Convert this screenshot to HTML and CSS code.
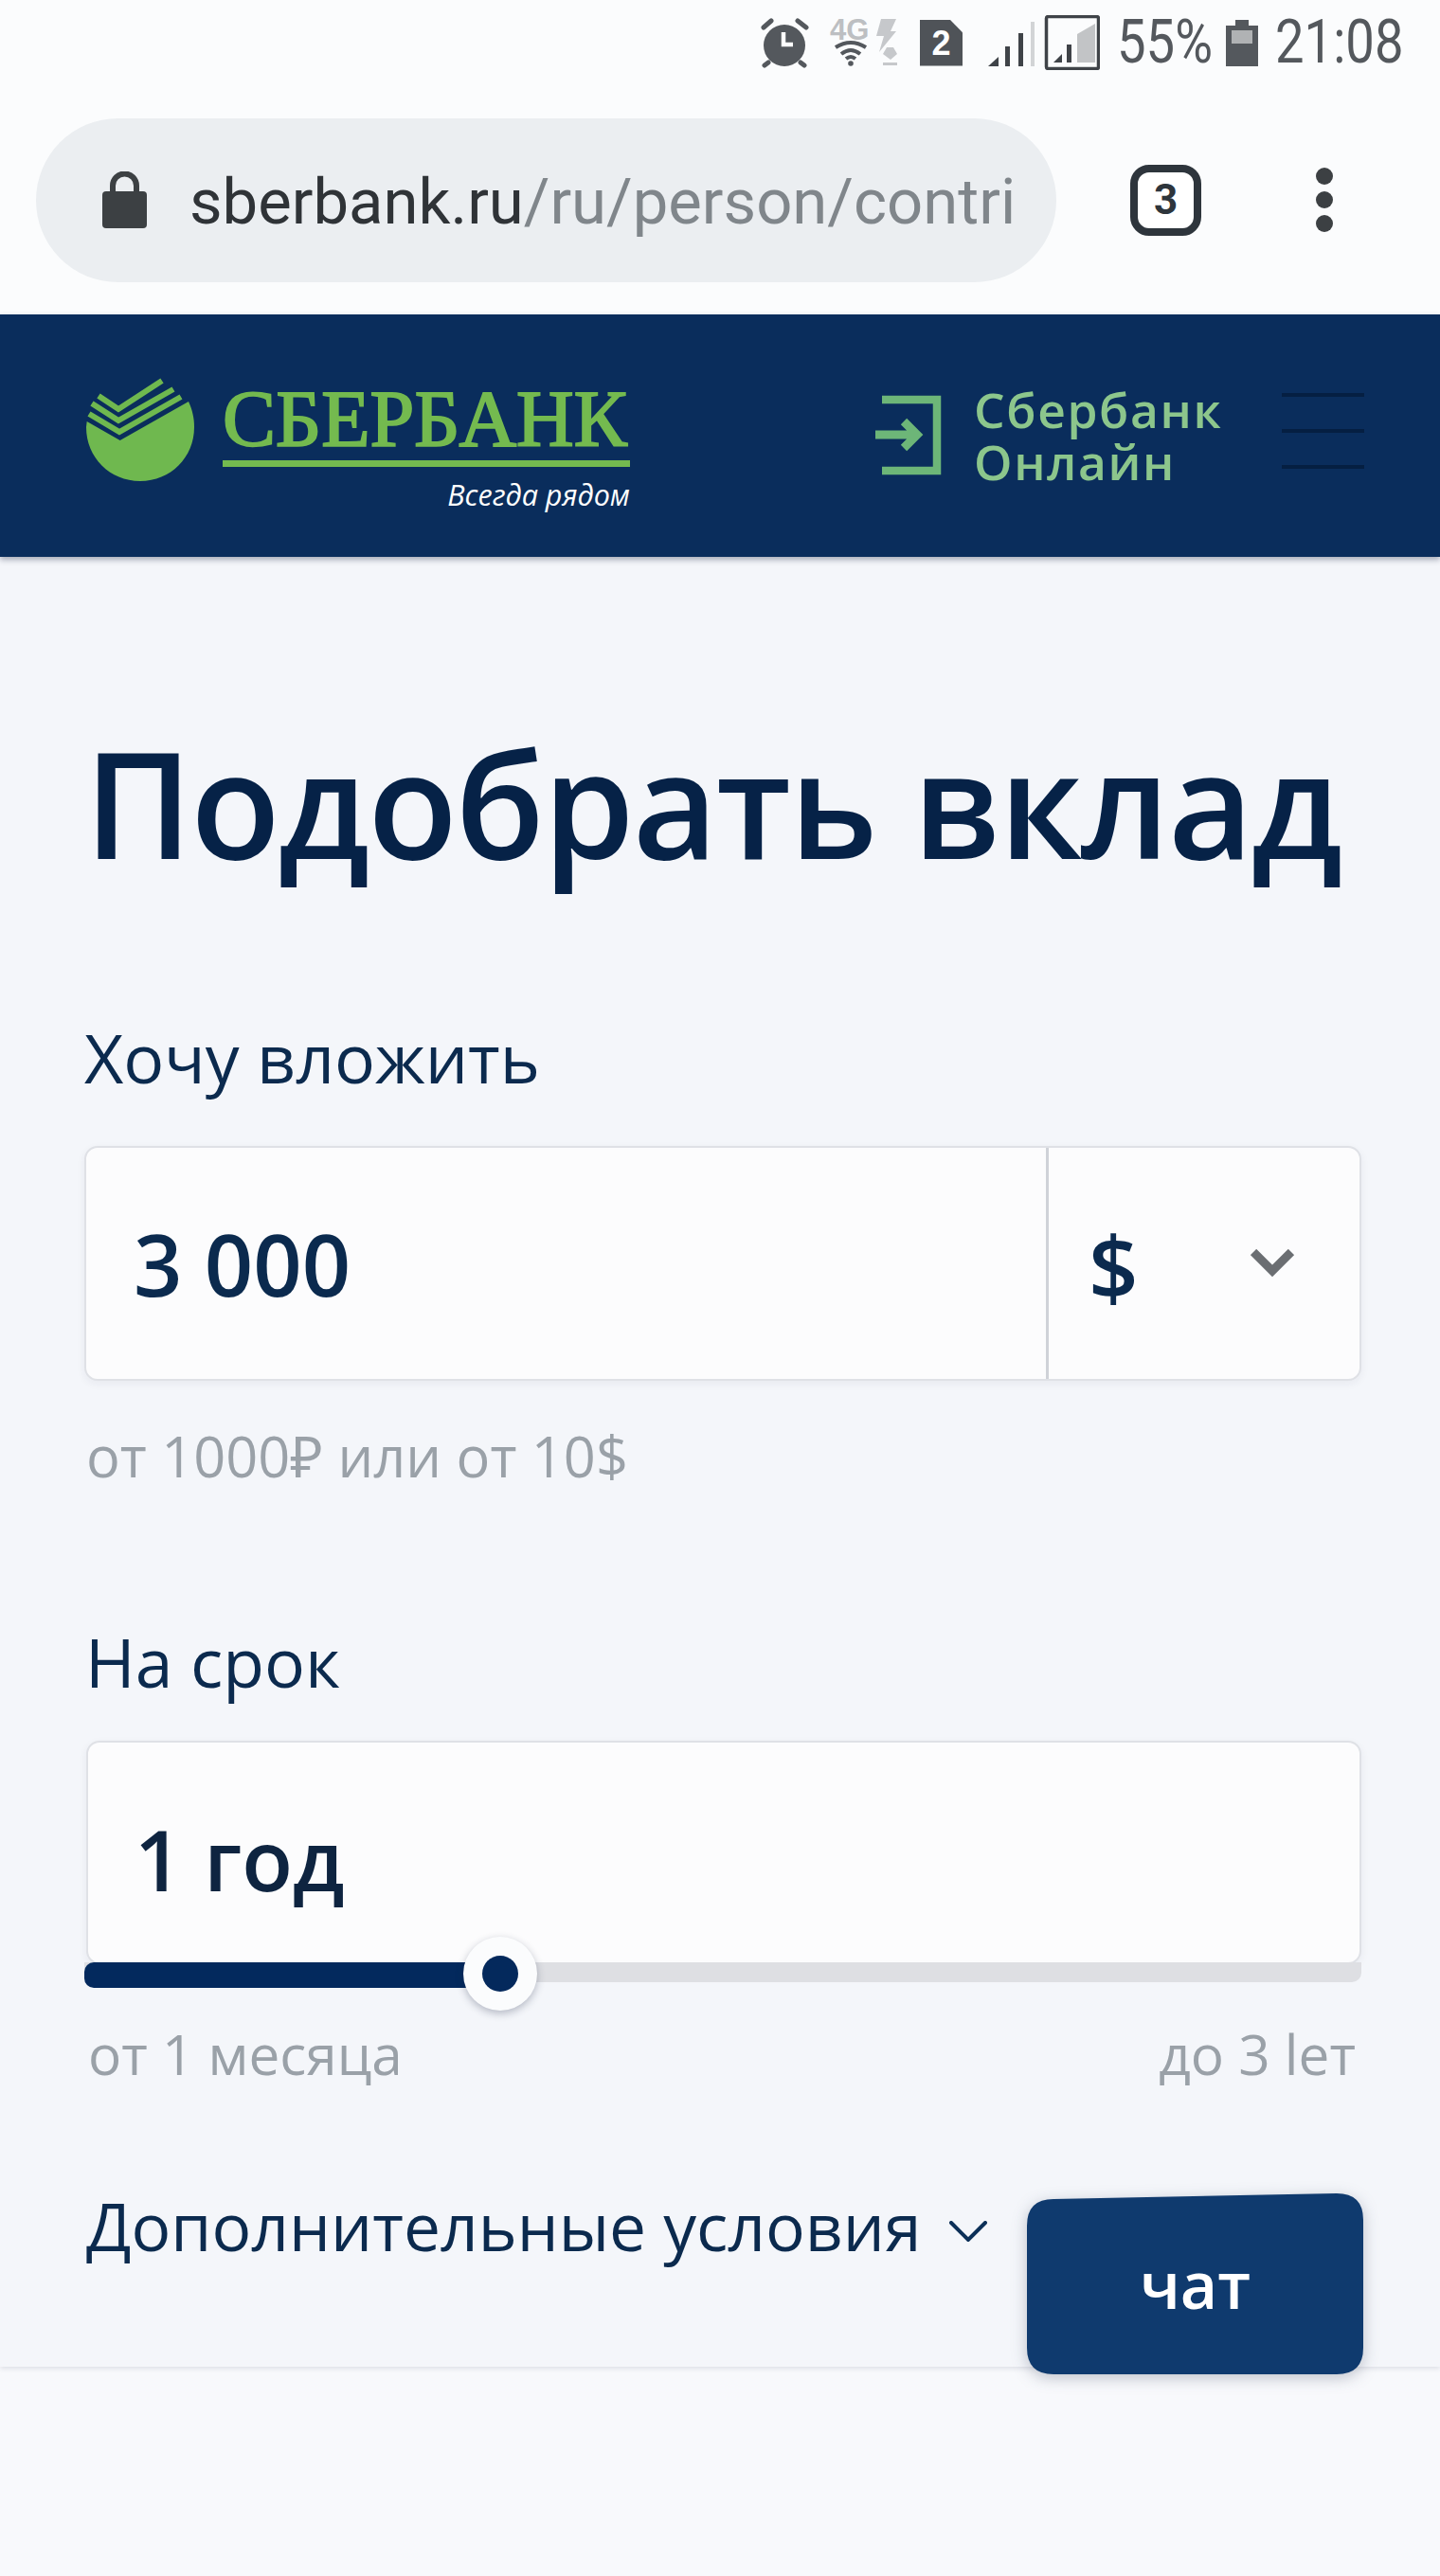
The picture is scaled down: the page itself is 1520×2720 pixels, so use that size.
FILE: index.html
```html
<!DOCTYPE html>
<html lang="ru">
<head>
    <meta charset="UTF-8">
    <meta name="viewport" content="width=device-width, initial-scale=1.0">
    <title>Подобрать вклад</title>
    <link rel="stylesheet" href="styles.css">
</head>
<body>
    <!-- строка состояния -->
    <div class="status-bar">
        <svg class="st-alarm" width="52" height="56" viewBox="0 0 52 56">
            <circle cx="25" cy="31" r="22" fill="#54585d"/>
            <path d="M3 12 11 5M39 5l9 7M8 49l-4 3M42 49l4 3" stroke="#54585d" stroke-width="5" stroke-linecap="round"/>
            <path d="M24 17V30H34" fill="none" stroke="#fff" stroke-width="4.5"/>
        </svg>
        <svg class="st-net" width="80" height="60" viewBox="0 0 80 60">
            <text class="st-4g" x="3" y="27">4G</text>
            <path d="M9 35Q25 25 41 35M15 42Q25 34 35 42M20 47Q25 43 30 47" fill="none" stroke="#54585d" stroke-width="4"/>
            <circle cx="25" cy="52" r="2.8" fill="#54585d"/>
            <path d="M57 5H73L67 18H73L55 40 60 23H52Z" fill="#c6c8cb"/>
            <path d="M63 35H70L74 42 67 48 59 42Z" fill="#c6c8cb"/>
            <rect x="59" y="51" width="15" height="3" fill="#c6c8cb"/>
        </svg>
        <div class="st-sim">2</div>
        <svg class="st-signal" width="118" height="58" viewBox="0 0 118 58">
            <path d="M0 54 11 44V54Z" fill="#3f4348"/>
            <rect x="18" y="33" width="5" height="21" fill="#3f4348"/>
            <rect x="32" y="19" width="5" height="35" fill="#3f4348"/>
            <rect x="45" y="7" width="4" height="47" fill="#d2d4d6"/>
            <rect x="61.5" y="1.5" width="55" height="55" rx="2" fill="none" stroke="#3f4348" stroke-width="3.5"/>
            <path d="M69 50 78 41V50Z" fill="#3f4348"/>
            <rect x="83" y="31" width="5" height="19" fill="#3f4348"/>
            <path d="M94 50V20L113 9V50Z" fill="#c2c4c6"/>
        </svg>
        <span class="st-text st-percent">55%</span>
        <svg class="st-battery" width="34" height="49" viewBox="0 0 34 49">
            <path d="M10 0H24V6H34V49H0V6H10Z" fill="#54585d"/>
            <rect x="6" y="11" width="22" height="14" fill="#b0b2b4"/>
        </svg>
        <span class="st-text st-time">21:08</span>
    </div>

    <!-- панель браузера -->
    <div class="toolbar">
        <div class="omnibox">
            <svg class="lock" width="47" height="60" viewBox="0 0 47 60">
                <path d="M11 24V15a12.500 12.500 0 0 1 25 0V24" fill="none" stroke="#3c4043" stroke-width="6"/>
                <rect x="0" y="21" width="47" height="39" rx="4" fill="#3c4043"/>
            </svg>
            <div class="url"><span class="url-host">sberbank.ru</span><span>/ru/person/contri</span></div>
        </div>
        <div class="tabs">3</div>
        <div class="menu-dots"><i></i><i></i><i></i></div>
    </div>

    <!-- шапка сайта -->
    <header class="site-header">
        <svg class="emblem" width="140" height="135" viewBox="0 0 140 135">
            <path d="M11.700 60 46.700 80 119 39C123 48 125 56 125 66 125 98 100 123 68 123 36 123 11 98 11 66Z" fill="#6fb84f"/>
            <path d="M24 33 45 47 91 17M17 41 45 59 103 26M14 52 46 71 111 34" fill="none" stroke="#6fb84f" stroke-width="6"/>
        </svg>
        <div class="logo">
            <div class="logo-name">СБЕРБАНК</div>
            <div class="logo-tag">Всегда рядом</div>
        </div>
        <svg class="login-icon" width="110" height="115" viewBox="0 0 110 115">
            <path d="M21 22H79V97H21" fill="none" stroke="#6db678" stroke-width="8.500"/>
            <path d="M14 59H57M44 45 58 59 44 73" fill="none" stroke="#6db678" stroke-width="9"/>
        </svg>
        <div class="login-text">
            <div>Сбербанк</div>
            <div>Онлайн</div>
        </div>
        <div class="burger"><i></i><i></i><i></i></div>
    </header>

    <main class="form-page">
        <h1>Подобрать вклад</h1>

        <div class="label">Хочу вложить</div>
        <div class="card amount-card">
            <div class="amount">3 000</div>
            <div class="currency">
                <span class="currency-sign">$</span>
                <svg width="46" height="30" viewBox="0 0 46 30"><path d="M3 3 23 23 43 3" fill="none" stroke="#6b6e72" stroke-width="9"/></svg>
            </div>
        </div>
        <div class="hint">от 1000₽ или от 10$</div>

        <div class="label label-term">На срок</div>
        <div class="card term-card">1 год</div>
        <div class="slider">
            <div class="slider-fill"></div>
            <div class="slider-thumb"></div>
        </div>
        <div class="range">
            <span>от 1 месяца</span>
            <span>до 3 lет</span>
        </div>

        <div class="more">
            <span>Дополнительные условия</span>
            <svg class="more-arrow" width="40" height="22" viewBox="0 0 40 22"><path d="M2 2 20 20 38 2" fill="none" stroke="#0c3058" stroke-width="4" stroke-linecap="round"/></svg>
        </div>
    </main>

    <div class="bottom-area"></div>

    <button class="chat"><span class="chat-shape">чат</span></button>
</body>
</html>
```

FILE: styles.css
```css
* {
    box-sizing: border-box;
}
html, body {
    margin: 0;
    height: 2720px;
    overflow: hidden;
}
body {
    position: relative;
    font-family: 'Open Sans', 'Noto Sans', sans-serif;
    background-color: #f8f9fc;
    color: #0b2a4e;
    display: flex;
    flex-direction: column;
}

/* строка состояния */
.status-bar {
    height: 90px;
    background-color: #fbfcfd;
    display: flex;
    align-items: center;
    justify-content: flex-end;
    gap: 18px;
    padding-right: 41px;
}
.st-text {
    display: block;
    font-family: Roboto, sans-serif;
    font-size: 64px;
    line-height: 64px;
    color: #54585d;
    white-space: nowrap;
    transform: scaleX(0.85);
    transform-origin: left center;
}
.st-percent {
    width: 97px;
}
.st-time {
    width: 133px;
}
.st-4g {
    font-family: 'Liberation Sans', sans-serif;
    font-weight: 700;
    font-size: 31px;
    fill: #bdbfc2;
}
.st-sim {
    width: 45px;
    height: 49px;
    background-color: #4f5358;
    clip-path: polygon(0 0, 70% 0, 100% 28%, 100% 100%, 0 100%);
    color: #fff;
    font-family: 'Liberation Sans', sans-serif;
    font-weight: 700;
    font-size: 36px;
    line-height: 49px;
    text-align: center;
}
.st-signal {
    margin-left: 9px;
}

/* панель браузера */
.toolbar {
    height: 242px;
    background-color: #fbfcfd;
    display: flex;
    align-items: center;
    padding-left: 38px;
}
.omnibox {
    width: 1077px;
    height: 173px;
    border-radius: 87px;
    background-color: #ebeef1;
    display: flex;
    align-items: center;
    padding-left: 70px;
    padding-right: 40px;
}
.lock {
    flex: none;
}
.url {
    margin-left: 45px;
    padding-top: 4px;
    font-family: Roboto, sans-serif;
    font-size: 67px;
    color: #80868b;
    white-space: nowrap;
    overflow: hidden;
}
.url-host {
    color: #2f3337;
}
.tabs {
    width: 75px;
    height: 75px;
    margin-left: 78px;
    border: 8px solid #2e353c;
    border-radius: 20px;
    font-family: Roboto, sans-serif;
    font-weight: 700;
    font-size: 44px;
    line-height: 59px;
    text-align: center;
    color: #2e353c;
    background-color: #fff;
}
.menu-dots {
    margin-left: 121px;
    display: flex;
    flex-direction: column;
    gap: 7px;
}
.menu-dots i {
    display: block;
    width: 18px;
    height: 18px;
    border-radius: 50%;
    background-color: #3c4043;
}

/* шапка сайта */
.site-header {
    height: 256px;
    background-color: #0a2d5c;
    box-shadow: 0 3px 6px rgba(20, 30, 60, 0.35);
    display: flex;
    align-items: flex-start;
    position: relative;
    padding-left: 80px;
}
.emblem {
    margin-top: 53px;
    flex: none;
}
.logo {
    margin-left: 15px;
    margin-top: 60px;
    width: 430px;
}
.logo-name {
    font-family: 'Liberation Serif', serif;
    font-size: 84px;
    line-height: 102px;
    color: #74ba4f;
    -webkit-text-stroke: 2px #74ba4f;
    border-bottom: 7px solid #74ba4f;
    height: 101px;
    white-space: nowrap;
}
.logo-tag {
    margin-top: 7px;
    font-size: 30.5px;
    line-height: 44px;
    font-style: italic;
    text-align: right;
    color: #fff;
    white-space: nowrap;
}
.login-icon {
    margin-left: 245px;
    margin-top: 68px;
    flex: none;
}
.login-text {
    margin-left: 8px;
    margin-top: 73px;
    font-weight: 600;
    font-size: 51.5px;
    line-height: 55px;
    letter-spacing: 1.6px;
    color: #8cc68c;
}
.burger {
    position: absolute;
    left: 1353px;
    top: 83px;
    width: 87px;
    display: flex;
    flex-direction: column;
    gap: 34px;
}
.burger i {
    display: block;
    height: 4px;
    background-color: #051f42;
}

/* форма */
.form-page {
    height: 1911px;
    padding: 169px 83px 0 89px;
    background-color: #f4f6fa;
    box-shadow: 0 2px 5px rgba(30, 40, 70, 0.12);
}
h1 {
    margin: 0;
    font-weight: 600;
    font-size: 155px;
    line-height: 180px;
    letter-spacing: -1.900px;
    color: #062247;
    white-space: nowrap;
}
.label {
    margin-top: 135px;
    font-size: 71.500px;
    line-height: 90px;
}
.card {
    background-color: #fcfcfd;
    border: 2px solid #dfe1e6;
    border-radius: 14px;
    box-shadow: 0 3px 10px rgba(30, 40, 70, 0.06);
}
.amount-card {
    margin-top: 48px;
    height: 248px;
    display: flex;
}
.amount {
    flex: 1;
    padding-left: 50px;
    font-weight: 600;
    font-size: 90px;
    line-height: 244px;
}
.currency {
    width: 331px;
    border-left: 3px solid #cfd2d8;
    display: flex;
    align-items: center;
    padding-left: 42px;
}
.currency-sign {
    padding-top: 6px;
    font-weight: 600;
    font-size: 92px;
    width: 171px;
}
.hint {
    margin-top: 39px;
    padding-left: 2px;
    font-size: 59.5px;
    line-height: 80px;
    color: #9aa1a8;
}
.label-term {
    margin-top: 133px;
    padding-left: 1px;
}
.term-card {
    margin: 38px 0 0 2px;
    height: 236px;
    padding-left: 49px;
    font-weight: 600;
    font-size: 88px;
    line-height: 246px;
    color: #0e2440;
}
.slider {
    position: relative;
    height: 21px;
    margin-top: -2px;
    background-color: #dedfe3;
    border-radius: 0 0 10px 10px;
}
.slider-fill {
    position: absolute;
    left: 0;
    top: 0;
    width: 420px;
    height: 27px;
    border-radius: 10px;
    background-color: #03295d;
}
.slider-thumb {
    position: absolute;
    left: 400px;
    top: -27px;
    width: 78px;
    height: 78px;
    border-radius: 50%;
    background-color: #fbfcfd;
    box-shadow: 0 3px 8px rgba(30, 40, 70, 0.3);
}
.slider-thumb::after {
    content: '';
    position: absolute;
    left: 20px;
    top: 20px;
    width: 38px;
    height: 38px;
    border-radius: 50%;
    background-color: #04295c;
}
.range {
    margin-top: 35px;
    padding: 0 6px 0 4px;
    display: flex;
    justify-content: space-between;
    font-size: 58.500px;
    line-height: 80px;
    color: #9aa1a8;
}
.more {
    margin-top: 94px;
    padding-left: 2px;
    display: flex;
    align-items: center;
    gap: 30px;
    font-size: 69.500px;
    line-height: 96px;
    white-space: nowrap;
}
.more-arrow {
    margin-top: 12px;
}

.bottom-area {
    flex: 1;
}

/* кнопка чата поверх страницы */
.chat {
    position: absolute;
    left: 1084px;
    top: 2316px;
    width: 355px;
    height: 191px;
    padding: 0;
    border: none;
    background: none;
    filter: drop-shadow(0 4px 8px rgba(20, 30, 60, 0.25));
}
.chat-shape {
    display: block;
    height: 100%;
    background-color: #0f3a6e;
    clip-path: path('M0 34Q0 6 28 6L327 0Q355 0 355 28V163Q355 191 327 191H28Q0 191 0 163Z');
    font-family: 'Open Sans', sans-serif;
    font-weight: 600;
    font-size: 68px;
    line-height: 192px;
    color: #fff;
}
```
